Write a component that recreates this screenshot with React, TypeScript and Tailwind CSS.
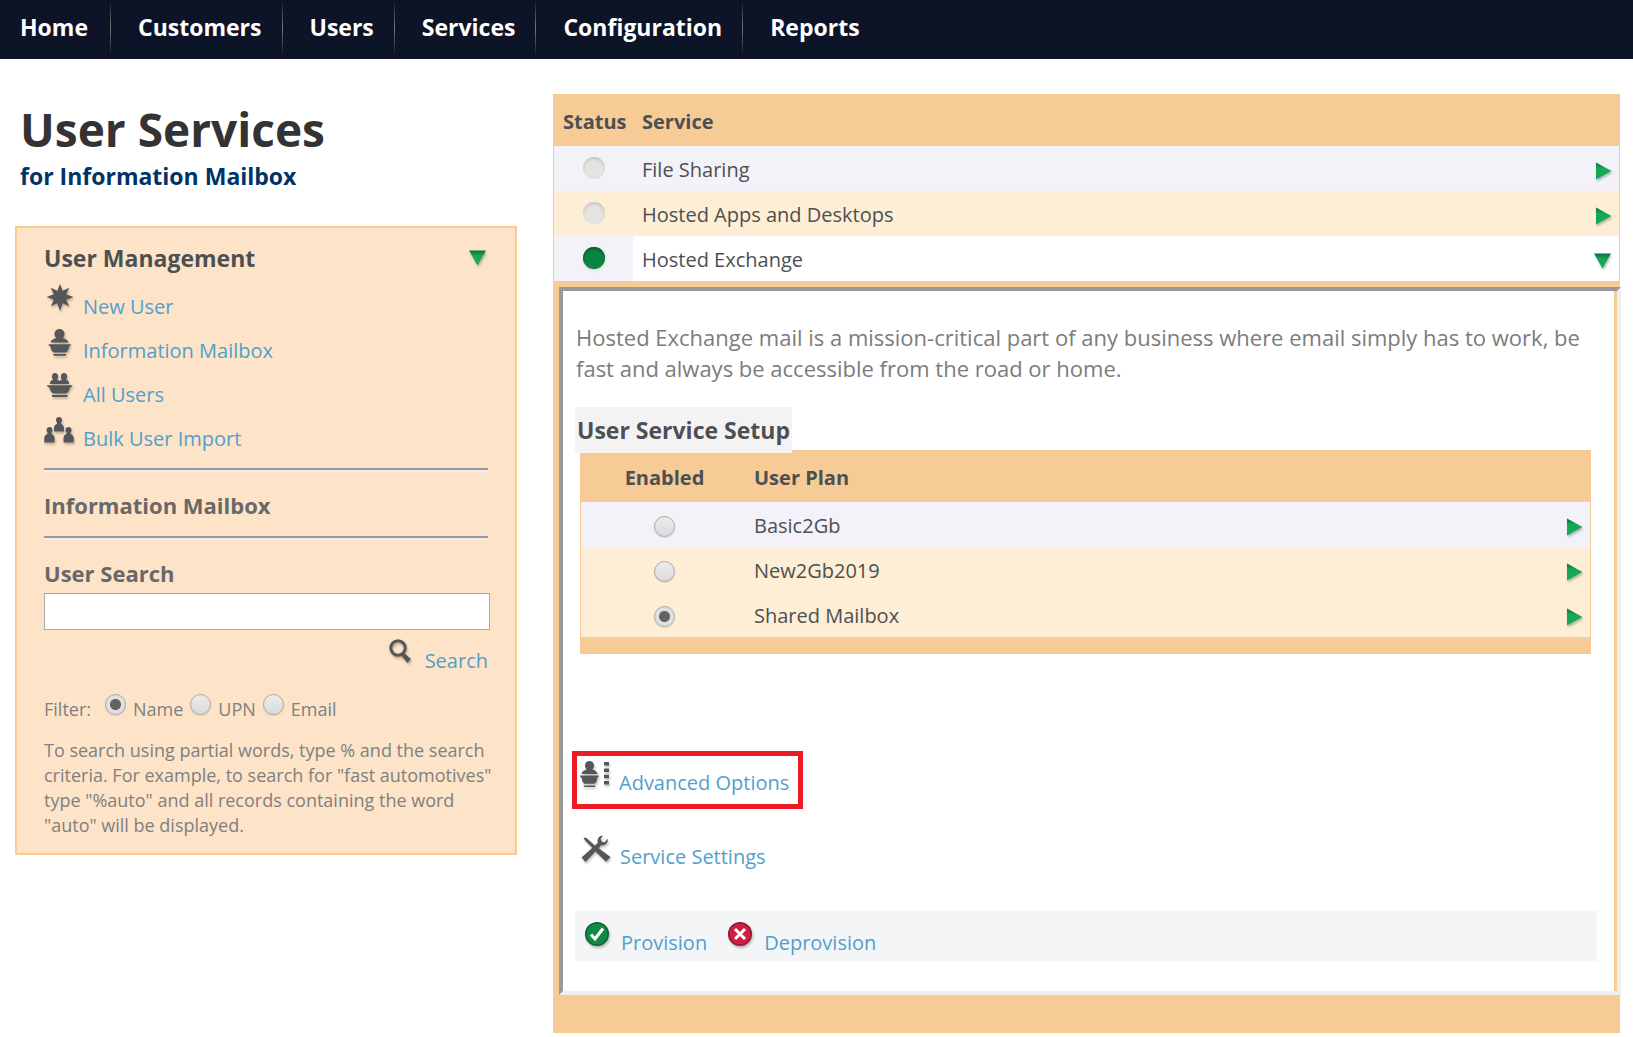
import { useState, type ReactNode } from "react";

const menu = ["Home", "Customers", "Users", "Services", "Configuration", "Reports"];

const services = [
  { name: "File Sharing", active: false, open: false, row: "bg-[#f3f2f9]", cell: "" },
  { name: "Hosted Apps and Desktops", active: false, open: false, row: "bg-[#fdeed5]", cell: "" },
  { name: "Hosted Exchange", active: true, open: true, row: "bg-[#f3f2f9]", cell: "bg-white" },
];

const plans = [
  { name: "Basic2Gb", row: "bg-[#f3f2f9]" },
  { name: "New2Gb2019", row: "bg-[#fdeed5]" },
  { name: "Shared Mailbox", row: "bg-[#fdeed5]" },
];

const filters = ["Name", "UPN", "Email"];

const radioClass =
  "h-[21px] w-[21px] shrink-0 appearance-none rounded-full border border-[#a9a9a9] bg-linear-to-b from-[#ececec] to-[#dadada] shadow-[0_1px_1px_rgba(0,0,0,0.12)] checked:bg-[radial-gradient(circle,#636363_5px,#e0e0e0_6px)]";

const shadow = "drop-shadow-[1px_2px_1px_rgba(0,0,0,0.25)]";

function Arrow({ down = false }: { down?: boolean }) {
  return (
    <svg width="18" height="18" viewBox="0 0 18 18" className={shadow} aria-hidden="true">
      <defs>
        <linearGradient id="arrow" x1="0" y1="0" x2="0" y2="1">
          <stop offset="0" stopColor="#0b6b38" />
          <stop offset="0.35" stopColor="#14a858" />
          <stop offset="1" stopColor="#14a858" />
        </linearGradient>
      </defs>
      <path d={down ? "M0 1.5h17L8.500 16.5z" : "M2 0.5v17L17.5 9z"} fill="url(#arrow)" />
    </svg>
  );
}

function StatusDot({ active }: { active: boolean }) {
  return (
    <span
      role="img"
      aria-label={active ? "Active" : "Inactive"}
      className={
        active
          ? "block h-[22px] w-[22px] rounded-full bg-[#0b8443] shadow-[inset_0_2px_3px_#075c2e,0_1px_3px_rgba(0,0,0,0.15)]"
          : "block h-[22px] w-[22px] rounded-full bg-[#e4e3e2] shadow-[inset_0_2px_3px_#c4c4c4]"
      }
    />
  );
}

function Icon({ children }: { children: ReactNode }) {
  return (
    <svg
      width="30"
      height="30"
      viewBox="0 0 30 30"
      fill="#54565a"
      className={`shrink-0 ${shadow}`}
      aria-hidden="true"
    >
      {children}
    </svg>
  );
}

function StarIcon() {
  return (
    <Icon>
      <path d="M16 0l2.700 6.700 6.500-2.900-3 6.500L29.500 13l-7.300 2.700 3 6.500-6.500-2.900L16 27l-2.700-7.700-6.500 2.900 3-6.500L2.500 13l7.300-2.700-3-6.500 6.500 2.900z" />
    </Icon>
  );
}

function UserIcon() {
  return (
    <Icon>
      <path d="M15.500 1c3 0 5 2.200 5 5 0 1.800-.7 3.200-1.800 4.100 3.300.8 5.300 2.100 5.800 4.400h-18c.5-2.300 2.500-3.600 5.800-4.400C11.200 9.200 10.500 7.800 10.500 6c0-2.800 2-5 5-5z" />
      <path d="M4.500 16.200h22.500c0 1.200-.8 1.800-2 2.200-.3 3.200-1.500 5.200-3.500 6H10c-2-.8-3.200-2.800-3.500-6-1.200-.4-2-1-2-2.200zM9.500 26h12.500v1.800H9.500z" />
    </Icon>
  );
}

function UsersIcon() {
  return (
    <Icon>
      <path d="M11 1c1.900 0 3.100 1.500 3.100 3.400 0 1.300-.5 2.300-1.200 3 1.200.5 2 1 2.600 1.700.6-.7 1.400-1.200 2.600-1.700-.7-.7-1.200-1.700-1.200-3C16.900 2.500 18.100 1 20 1s3.100 1.500 3.100 3.400c0 1.300-.5 2.300-1.200 3 2 .7 3.100 2 3.300 4.600H5.800c.2-2.600 1.300-3.900 3.300-4.600-.7-.7-1.200-1.700-1.200-3C7.900 2.500 9.100 1 11 1z" />
      <path d="M3 13.200h25.500c0 1.300-1 2-2.500 2.400-.7 3.200-2 5.200-4 6H9.500c-2-.8-3.300-2.800-4-6-1.500-.4-2.500-1.100-2.500-2.400zM8 23h15.500v2H8z" />
    </Icon>
  );
}

function BulkIcon() {
  return (
    <Icon>
      <path d="M15 1c1.800 0 3 1.300 3 3.100 0 1-.4 1.900-1 2.500v1.300c1.800.5 3 2 3 4v3.600H10v-3.600c0-2 1.200-3.500 3-4V6.600c-.6-.6-1-1.500-1-2.500C12 2.300 13.200 1 15 1z" />
      <path d="M5.500 11c1.800 0 3 1.300 3 3.100 0 1-.4 1.900-1 2.500v1.300c1.800.5 3 2 3 4v4.600H.300v-4.600c0-2 1.400-3.500 3.200-4v-1.300c-.6-.6-1-1.500-1-2.500 0-1.800 1.200-3.100 3-3.100z" />
      <path d="M24.500 11c1.800 0 3 1.300 3 3.100 0 1-.4 1.900-1 2.500v1.300c1.800.5 3.200 2 3.200 4v4.600H19.500v-4.600c0-2 1.200-3.500 3-4v-1.300c-.6-.6-1-1.500-1-2.500 0-1.800 1.200-3.100 3-3.100z" />
    </Icon>
  );
}

function SearchIcon() {
  return (
    <Icon>
      <circle cx="12" cy="11" r="7.200" fill="none" stroke="#54565a" strokeWidth="3" />
      <path d="M17.500 15.500l7.500 6.500-3.500 4-6.300-7.500z" />
    </Icon>
  );
}

function AdvancedIcon() {
  return (
    <Icon>
      <path d="M9.500 1c2.700 0 4.500 2 4.500 4.600 0 1.600-.6 2.900-1.600 3.800 3 .8 4.800 2 5.200 4.600H1.400c.4-2.600 2.200-3.800 5.200-4.600C5.600 8.500 5 7.200 5 5.600 5 3 6.800 1 9.500 1z" />
      <path d="M0 15.500h19c0 1.200-.7 1.900-1.700 2.200-.4 3.200-1.300 5.200-3.100 6H4.800c-1.800-.8-2.700-2.800-3.100-6C.700 17.400 0 16.700 0 15.500zM3.800 25.500h11.400V27H3.800zM24 2h5v3.500h-5zM24 8.500h5V12h-5zM24 14.700h5v3.500h-5zM24 21h5v3.500h-5z" />
    </Icon>
  );
}

function ToolsIcon() {
  return (
    <Icon>
      <path d="M2.500 3.500l3 .5 8.300 7.600 3-2.800c-.8-3.300.600-6.500 4.200-7.300l.8.300-2.200 3.200 1.200 2.800 3 .4 2.300-3.200.7.500c.3 3.800-2.800 6.500-6.500 5.800l-2.600 2.900 11.800 8.800-4.500 4.800-10.600-10.300L4.500 28 .5 23.500l10.900-9.700L3.800 6.200z" />
    </Icon>
  );
}

function RoundIcon({ color, edge, children }: { color: string; edge: string; children: ReactNode }) {
  return (
    <svg width="30" height="30" viewBox="0 0 30 30" className={`shrink-0 ${shadow}`} aria-hidden="true">
      <circle cx="15" cy="14" r="11.300" fill={color} stroke={edge} strokeWidth="1.500" />
      {children}
    </svg>
  );
}

function IconLink({ icon, text }: { icon: ReactNode; text: string }) {
  return (
    <a href="#" className="flex items-start gap-[9px] text-[#529fcb] hover:underline">
      {icon}
      <span className="pt-2 leading-[30px]">{text}</span>
    </a>
  );
}

function Sidebar() {
  const [query, setQuery] = useState("");
  const [filter, setFilter] = useState("Name");

  return (
    <aside className="border-2 border-[#f8cb92] bg-[#fde4c8] pt-[10px] pr-[25px] pb-[15px] pl-[27px]">
      <div className="flex items-center justify-between">
        <h2 className="text-[23px] leading-10 font-bold text-[#4c5053]">User Management</h2>
        <button type="button" aria-label="Collapse User Management" className="mr-[3px]">
          <Arrow down />
        </button>
      </div>

      <nav className="mt-[6px] flex flex-col gap-[6px] text-[20px]">
        <IconLink icon={<StarIcon />} text="New User" />
        <IconLink icon={<UserIcon />} text="Information Mailbox" />
        <IconLink icon={<UsersIcon />} text="All Users" />
        <IconLink icon={<BulkIcon />} text="Bulk User Import" />
      </nav>

      <hr className="mt-[14px] mr-0.5 border-t-2 border-b-2 border-t-[#999] border-b-[#eee]" />
      <h3 className="mt-[18px] mb-4 text-[22px] leading-[30px] font-bold text-[#686868]">Information Mailbox</h3>
      <hr className="mr-0.5 border-t-2 border-b-2 border-t-[#999] border-b-[#eee]" />

      <form onSubmit={(event) => event.preventDefault()}>
        <label htmlFor="search" className="mt-[18px] block text-[22px] leading-[30px] font-bold text-[#686868]">
          User Search
        </label>
        <input
          id="search"
          type="text"
          value={query}
          onChange={(event) => setQuery(event.target.value)}
          className="mt-[5px] block h-[37px] w-full border border-[#a9a9a9] bg-white px-2 text-xl outline-none"
        />
        <div className="mt-[7px] mr-0.5 flex justify-end">
          <button type="submit" className="flex items-start gap-[9px] text-[20px] text-[#529fcb]">
            <SearchIcon />
            <span className="pt-[9px] leading-[30px]">Search</span>
          </button>
        </div>

        <fieldset className="mt-[13px] flex items-start text-[18px] leading-[30px] text-[#808080]">
          <span className="mr-[14px] pt-[5px]">Filter:</span>
          {filters.map((item) => (
            <label key={item} className="mr-[7px] flex items-start gap-[7px]">
              <input
                type="radio"
                name="filter"
                checked={filter === item}
                onChange={() => setFilter(item)}
                className={`mt-[5px] ${radioClass}`}
              />
              <span className="pt-[5px]">{item}</span>
            </label>
          ))}
        </fieldset>
      </form>

      <p className="mt-[14px] -mr-2 text-[18px] leading-[25px] text-[#808080]">
        To search using partial words, type % and the search criteria. For example, to search for "fast
        automotives" type "%auto" and all records containing the word "auto" will be displayed.
      </p>
    </aside>
  );
}

function PlanTable() {
  const [plan, setPlan] = useState("Shared Mailbox");

  return (
    <div className="bg-[#f7cb96] px-px pb-[17px]">
      <table className="w-full text-left">
        <thead>
          <tr className="h-[52px] font-bold">
            <th className="w-[167px] pt-1 text-center">Enabled</th>
            <th className="pt-1 pl-[6px]">User Plan</th>
            <th className="w-8" />
          </tr>
        </thead>
        <tbody>
          {plans.map((item) => (
            <tr key={item.name} className={`h-[45px] ${item.row}`}>
              <td>
                <input
                  type="radio"
                  name="plan"
                  aria-label={item.name}
                  checked={plan === item.name}
                  onChange={() => setPlan(item.name)}
                  className={`mx-auto mt-1 block ${radioClass}`}
                />
              </td>
              <td className="pt-[3px] pl-[6px]">{item.name}</td>
              <td>
                <button type="button" aria-label={`Expand ${item.name}`} className="mt-1 ml-[7px] block">
                  <Arrow />
                </button>
              </td>
            </tr>
          ))}
        </tbody>
      </table>
    </div>
  );
}

function ServiceDetails() {
  return (
    <section className="border-4 border-t-[#999] border-r-[#eee] border-b-[#eee] border-l-[#999]">
      <div className="border-r-[3px] border-[#f7cb96] bg-white pt-[31px] pr-[17px] pb-[30px] pl-3">
        <p className="pl-px text-[22px] leading-[31px] text-[#7c7c7c]">
          Hosted Exchange mail is a mission-critical part of any business where email simply has to work, be fast
          and always be accessible from the road or home.
        </p>

        <h2 className="relative mt-[23px] -mb-[3px] w-fit bg-[#f3f3f3] px-0.5 text-[23px] leading-[46px] font-bold">
          User Service Setup
        </h2>
        <div className="pr-[6px] pl-[5px]">
          <PlanTable />
        </div>

        <div className="mt-[97px] -ml-[3px] w-fit border-[5px] border-[#ed1c24] pt-1 pr-[9px] pb-[6px] pl-[3px]">
          <IconLink icon={<AdvancedIcon />} text="Advanced Options" />
        </div>
        <div className="mt-[25px] ml-[6px] w-fit">
          <IconLink icon={<ToolsIcon />} text="Service Settings" />
        </div>

        <div className="mt-[39px] flex gap-[18px] bg-[#f4f5f7] pt-[9px] pb-[3px] pl-[7px]">
          <IconLink
            icon={
              <RoundIcon color="#128a45" edge="#0a6532">
                <path d="M9 14.500l4 4.500 8-10.500" fill="none" stroke="#fff" strokeWidth="3" />
              </RoundIcon>
            }
            text="Provision"
          />
          <IconLink
            icon={
              <RoundIcon color="#cf1f45" edge="#941733">
                <path d="M10 9l10 10M20 9L10 19" fill="none" stroke="#fff" strokeWidth="3" />
              </RoundIcon>
            }
            text="Deprovision"
          />
        </div>
      </div>
    </section>
  );
}

export default function App() {
  return (
    <div className="min-h-screen bg-white font-['Open_Sans',sans-serif]">
      <header className="h-[59px] bg-[#0e1428]">
        <nav className="flex text-[23px] leading-[54px] font-bold text-white">
          {menu.map((item, index) => (
            <div key={item} className="flex">
              {index > 0 && <span className="h-14 w-px bg-linear-to-b from-transparent via-[#777] to-transparent" />}
              <a href="#" className={index === 0 ? "pr-[22px] pl-5" : "pr-5 pl-[27px]"}>
                {item}
              </a>
            </div>
          ))}
        </nav>
      </header>

      <div className="flex items-start gap-9 pr-[13px] pl-[15px]">
        <div className="w-[502px] shrink-0">
          <h1 className="mt-10 pl-[5px] text-[46px] leading-[60px] font-bold text-[#333]">User Services</h1>
          <p className="mb-[33px] pl-[5px] text-[23px] leading-[34px] font-bold text-[#003366]">
            for Information Mailbox
          </p>
          <Sidebar />
        </div>

        <main className="mt-[35px] min-w-0 flex-1 bg-[#f7cb96] pb-[38px] text-[20px] text-[#4c5053]">
          <div className="px-px">
            <table className="w-full text-left">
              <thead>
                <tr className="h-[52px] font-bold">
                  <th className="w-[79px] pt-1 pl-[9px]">Status</th>
                  <th className="pt-1 pl-[9px]">Service</th>
                  <th className="w-8" />
                </tr>
              </thead>
              <tbody>
                {services.map((item) => (
                  <tr key={item.name} className={`h-[45px] ${item.row}`}>
                    <td className="pb-0.5">
                      <div className="flex justify-center">
                        <StatusDot active={item.active} />
                      </div>
                    </td>
                    <td className={`pt-[3px] pl-[9px] ${item.cell}`}>{item.name}</td>
                    <td className={item.cell}>
                      <button type="button" aria-label={`Toggle ${item.name}`} className="mt-1 ml-[7px] block">
                        <Arrow down={item.open} />
                      </button>
                    </td>
                  </tr>
                ))}
              </tbody>
            </table>
          </div>
          <div className="mt-[6px] -mr-px ml-[6px]">
            <ServiceDetails />
          </div>
        </main>
      </div>
    </div>
  );
}
